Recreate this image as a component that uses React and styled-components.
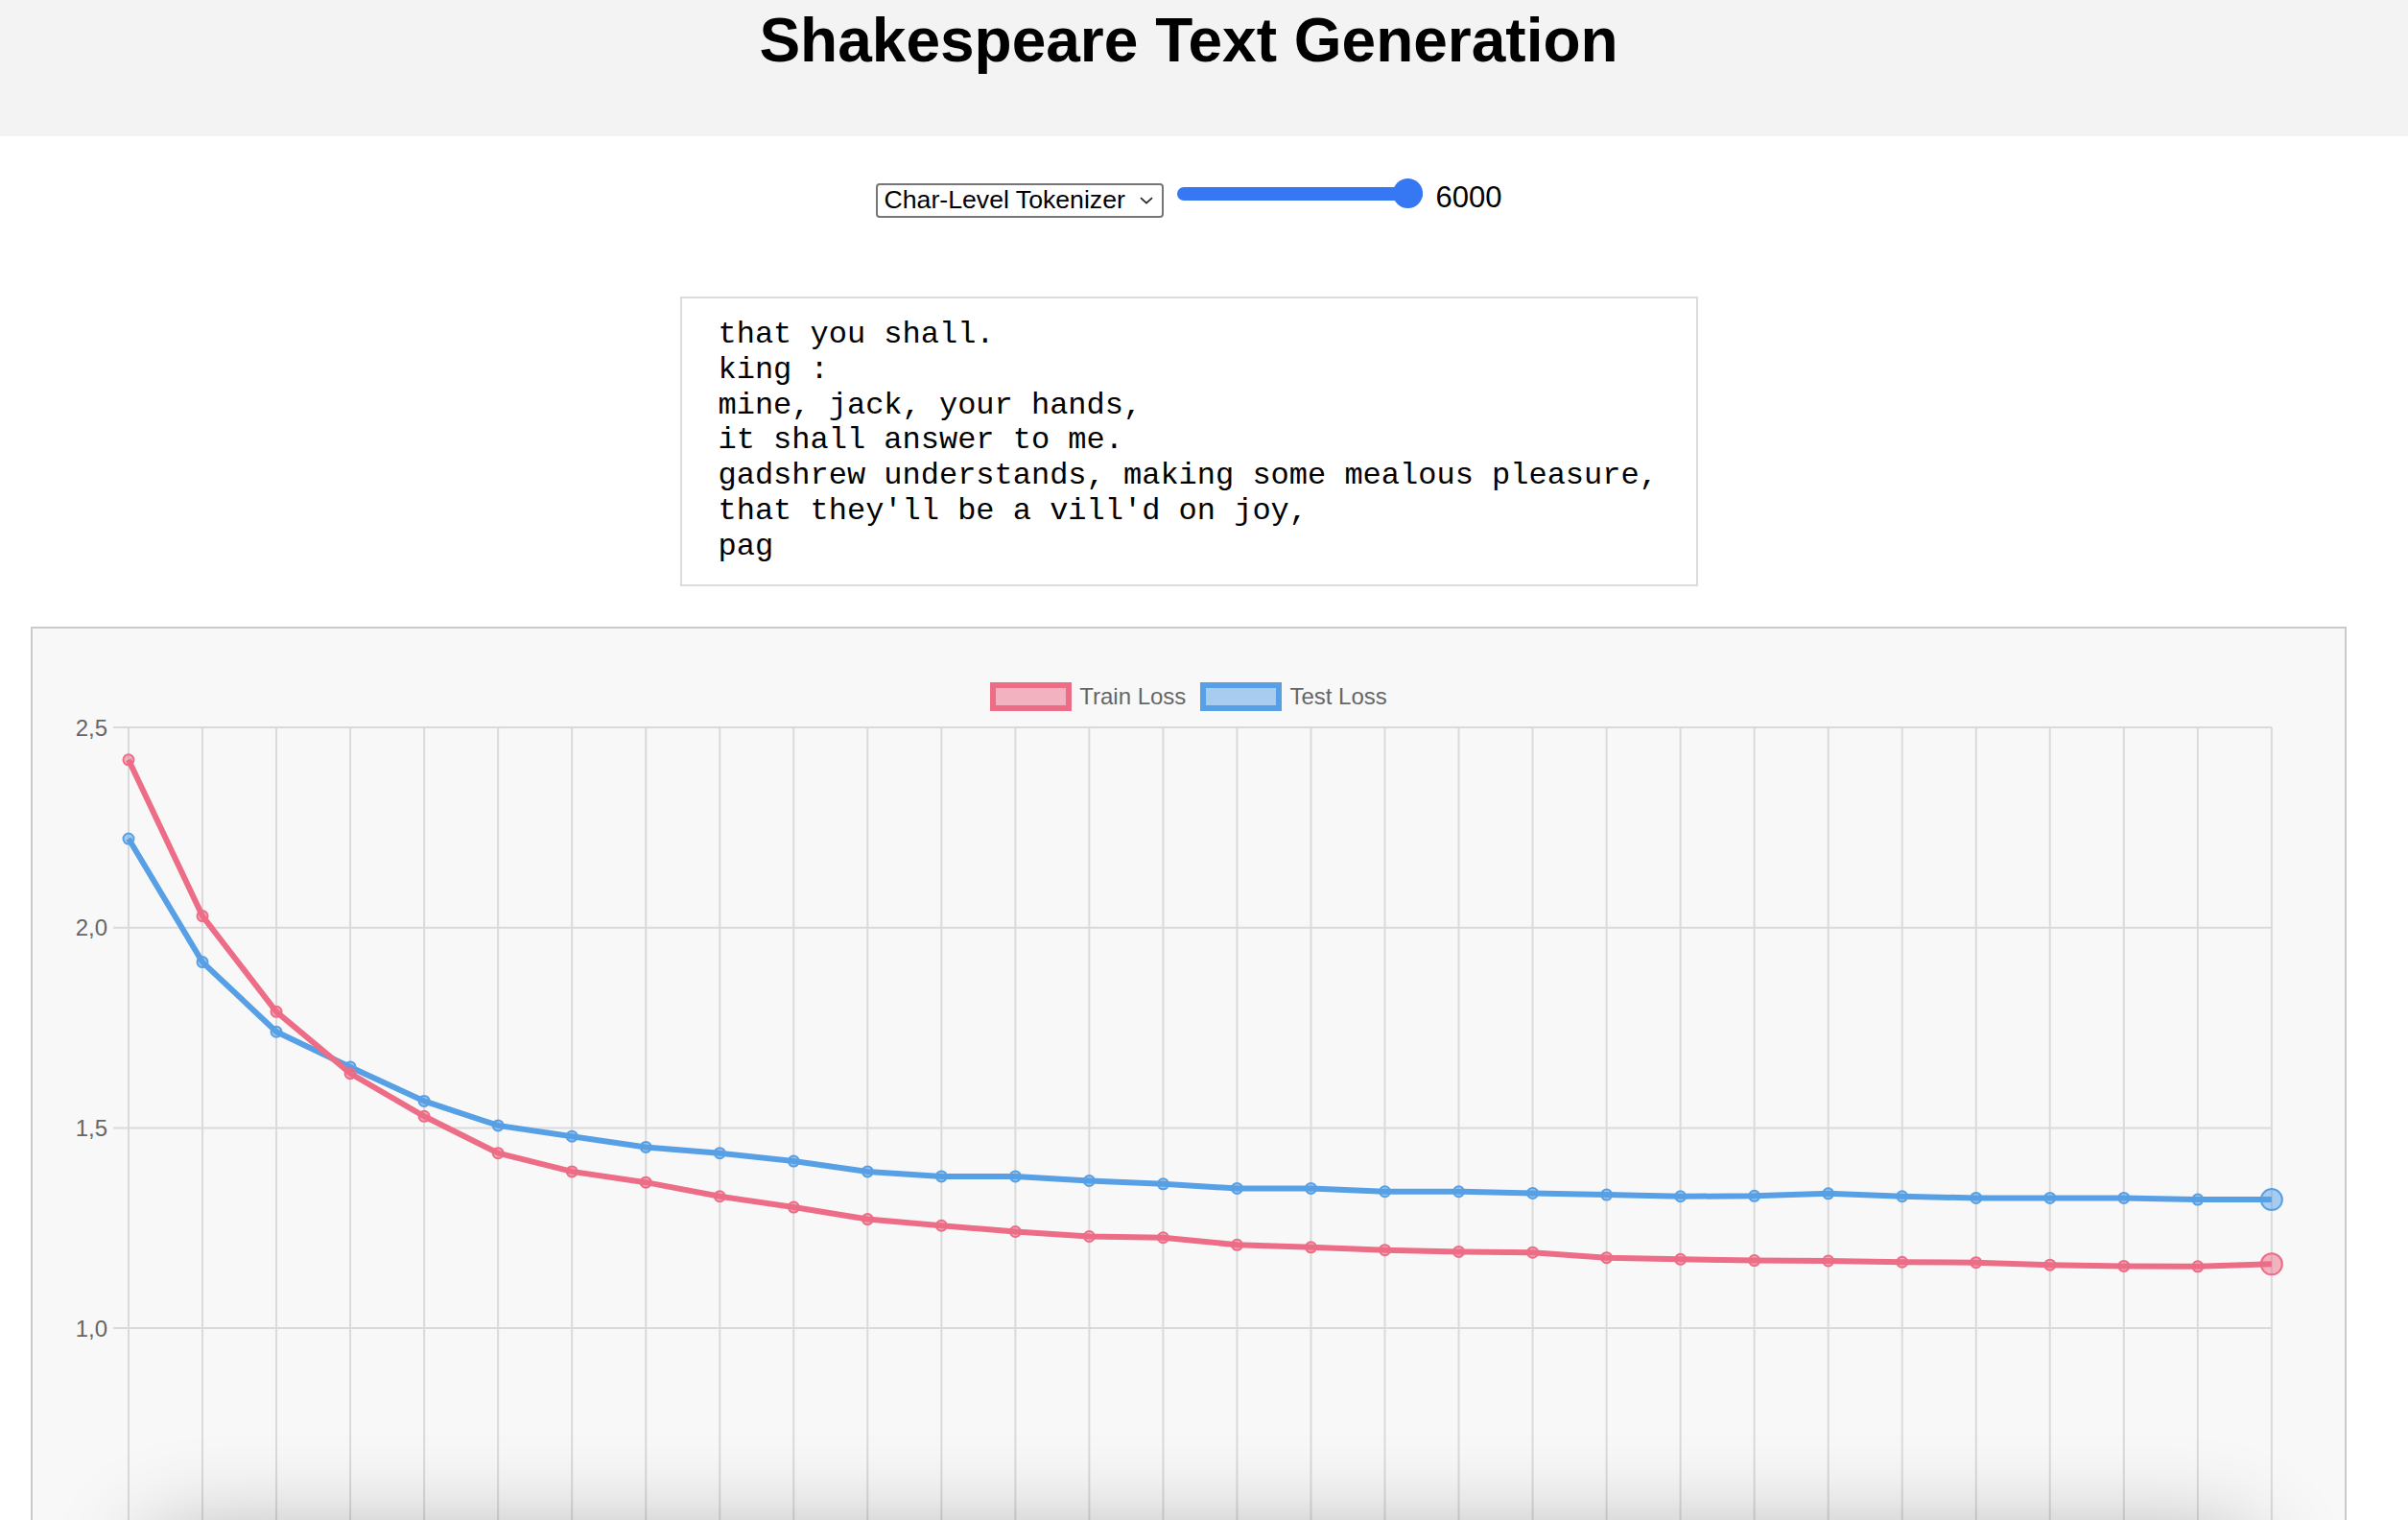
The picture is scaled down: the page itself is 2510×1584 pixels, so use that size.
import React, { useState } from 'react';
import styled, { createGlobalStyle } from 'styled-components';

const GlobalStyle = createGlobalStyle`
  html, body {
    margin: 0;
    padding: 0;
    overflow: hidden;
    background: #ffffff;
    font-family: "Liberation Sans", Arial, Helvetica, sans-serif;
  }
`;

const TRAIN = [
  2.419, 2.029, 1.790, 1.636, 1.529, 1.437, 1.391, 1.364, 1.329, 1.302,
  1.272, 1.256, 1.241, 1.229, 1.226, 1.208, 1.202, 1.195, 1.191, 1.189,
  1.176, 1.172, 1.169, 1.168, 1.165, 1.164, 1.158, 1.155, 1.154, 1.160,
];

const TEST = [
  2.222, 1.914, 1.740, 1.652, 1.567, 1.506, 1.479, 1.452, 1.437, 1.417,
  1.391, 1.379, 1.379, 1.368, 1.360, 1.349, 1.349, 1.341, 1.341, 1.337,
  1.333, 1.329, 1.330, 1.336, 1.329, 1.325, 1.325, 1.325, 1.321, 1.321,
];

const SAMPLE = `that you shall.
king :
mine, jack, your hands,
it shall answer to me.
gadshrew understands, making some mealous pleasure,
that they'll be a vill'd on joy,
pag`;

const RED = '#ed6c86';
const BLUE = '#57a0e5';
const RED_FILL = 'rgba(237, 108, 134, 0.5)';
const BLUE_FILL = 'rgba(87, 160, 229, 0.5)';

// plot geometry, in svg coords
const X0 = 100;
const STEP = 77.03;
const TOP = 17;
const PER_UNIT = 417.4;
const xAt = (i) => X0 + i * STEP;
const yAt = (v) => TOP + (2.5 - v) * PER_UNIT;

const Page = styled.div`
  height: 100vh;
  overflow: hidden;
`;

const Header = styled.header`
  box-sizing: border-box;
  height: 142px;
  padding: 5px 32px 0 0;
  background: #f3f3f3;
`;

const Title = styled.h1`
  margin: 0;
  text-align: center;
  font-size: 64px;
  line-height: 74px;
  font-weight: 700;
  color: #000;
`;

const Main = styled.main`
  width: 2478px;
`;

const Controls = styled.div`
  display: flex;
  justify-content: center;
  align-items: flex-start;
  gap: 14px;
  margin-top: 44px;
`;

const SelectWrap = styled.div`
  display: flex;
  align-items: center;
  box-sizing: border-box;
  width: 300px;
  height: 36px;
  margin-top: 5px;
  padding-right: 9px;
  border: 2px solid #767676;
  border-radius: 4px;
  background: #fff;
`;

const Select = styled.select`
  flex: 1;
  height: 100%;
  appearance: none;
  -webkit-appearance: none;
  border: none;
  outline: none;
  background: transparent;
  padding: 0 0 2px 7px;
  font-family: "Liberation Sans", Arial, sans-serif;
  font-size: 26.67px;
  color: #000;
`;

const Range = styled.input`
  -webkit-appearance: none;
  appearance: none;
  width: 256px;
  height: 31px;
  margin: 0;
  background: transparent;

  &::-webkit-slider-runnable-track {
    height: 14px;
    border-radius: 7px;
    background: #3677f3;
  }

  &::-webkit-slider-thumb {
    -webkit-appearance: none;
    width: 31px;
    height: 31px;
    margin-top: -8.5px;
    border-radius: 50%;
    background: #3677f3;
  }
`;

const RangeValue = styled.span`
  margin-top: 2px;
  font-size: 31px;
  line-height: 36px;
  color: #000;
`;

const Output = styled.pre`
  box-sizing: border-box;
  width: 1061px;
  margin: 82px auto 0;
  padding: 20px 38px;
  border: 2px solid #dcdcdc;
  background: #fff;
  font-family: "Liberation Mono", "Courier New", monospace;
  font-size: 32px;
  line-height: 36.8px;
  color: #000;
  white-space: pre;
`;

const ChartCard = styled.section`
  position: relative;
  box-sizing: border-box;
  height: 1100px;
  margin: 42px 32px 0;
  border: 2px solid #cbcbcb;
  background: #f8f8f8;
`;

const Legend = styled.div`
  display: flex;
  justify-content: center;
  gap: 15px;
  margin-top: 56px;
  height: 30px;
`;

const LegendItem = styled.div`
  display: flex;
  align-items: center;
  gap: 8px;
`;

const Swatch = styled.span`
  box-sizing: border-box;
  width: 85px;
  height: 30px;
  border: 6px solid ${(p) => p.color};
  background: ${(p) => p.fill};
`;

const LegendLabel = styled.span`
  font-size: 24px;
  line-height: 30px;
  color: #666;
`;

const Plot = styled.svg`
  display: block;
`;

// soft shadow of something sitting just below the fold
const FoldShadow = styled.div`
  position: absolute;
  top: 946px;
  left: 116px;
  width: 2200px;
  height: 200px;
  border-radius: 40px;
  box-shadow: 0 0 100px rgba(0, 0, 0, 0.3);
  pointer-events: none;
`;

const Series = ({ data, color, fill }) => {
  const pts = data.map((v, i) => `${xAt(i)},${yAt(v)}`).join(' ');
  const last = data.length - 1;
  return (
    <g>
      <polyline points={pts} fill="none" stroke={color} strokeWidth="6" />
      {data.map((v, i) => (
        <circle
          key={i}
          cx={xAt(i)}
          cy={yAt(v)}
          r={i === last ? 11 : 5.5}
          fill={fill}
          stroke={color}
          strokeWidth="2"
        />
      ))}
    </g>
  );
};

const LossChart = () => {
  const ticks = [2.5, 2.0, 1.5, 1.0, 0.5];
  return (
    <Plot width="2410" height="900" viewBox="0 0 2410 900">
      {TRAIN.map((_, i) => (
        <line
          key={i}
          x1={xAt(i)}
          x2={xAt(i)}
          y1={TOP}
          y2={900}
          stroke="#dadada"
          strokeWidth="2"
        />
      ))}
      {ticks.map((t) => (
        <g key={t}>
          <line
            x1={84}
            x2={xAt(TRAIN.length - 1)}
            y1={yAt(t)}
            y2={yAt(t)}
            stroke="#dadada"
            strokeWidth="2"
          />
          <text
            x={78}
            y={yAt(t) + 8.5}
            textAnchor="end"
            fontFamily="Liberation Sans, Arial, sans-serif"
            fontSize="24"
            fill="#666"
          >
            {t.toFixed(1).replace('.', ',')}
          </text>
        </g>
      ))}
      <Series data={TEST} color={BLUE} fill={BLUE_FILL} />
      <Series data={TRAIN} color={RED} fill={RED_FILL} />
    </Plot>
  );
};

const App = () => {
  const [tokenizer, setTokenizer] = useState('char');
  const [steps, setSteps] = useState(6000);

  return (
    <Page>
      <GlobalStyle />
      <Header>
        <Title>Shakespeare Text Generation</Title>
      </Header>
      <Main>
        <Controls>
          <SelectWrap>
            <Select value={tokenizer} onChange={(e) => setTokenizer(e.target.value)}>
              <option value="char">Char-Level Tokenizer</option>
              <option value="word">Word-Level Tokenizer</option>
            </Select>
            <svg width="14" height="8" viewBox="0 0 14 8">
              <path d="M1 1.2 L7 6.6 L13 1.2" fill="none" stroke="#222" strokeWidth="1.6" />
            </svg>
          </SelectWrap>
          <Range
            type="range"
            min="0"
            max="6000"
            step="100"
            value={steps}
            onChange={(e) => setSteps(Number(e.target.value))}
          />
          <RangeValue>{steps}</RangeValue>
        </Controls>
        <Output>{SAMPLE}</Output>
        <ChartCard>
          <Legend>
            <LegendItem>
              <Swatch color={RED} fill={RED_FILL} />
              <LegendLabel>Train Loss</LegendLabel>
            </LegendItem>
            <LegendItem>
              <Swatch color={BLUE} fill={BLUE_FILL} />
              <LegendLabel>Test Loss</LegendLabel>
            </LegendItem>
          </Legend>
          <LossChart />
          <FoldShadow />
        </ChartCard>
      </Main>
    </Page>
  );
};

export default App;
